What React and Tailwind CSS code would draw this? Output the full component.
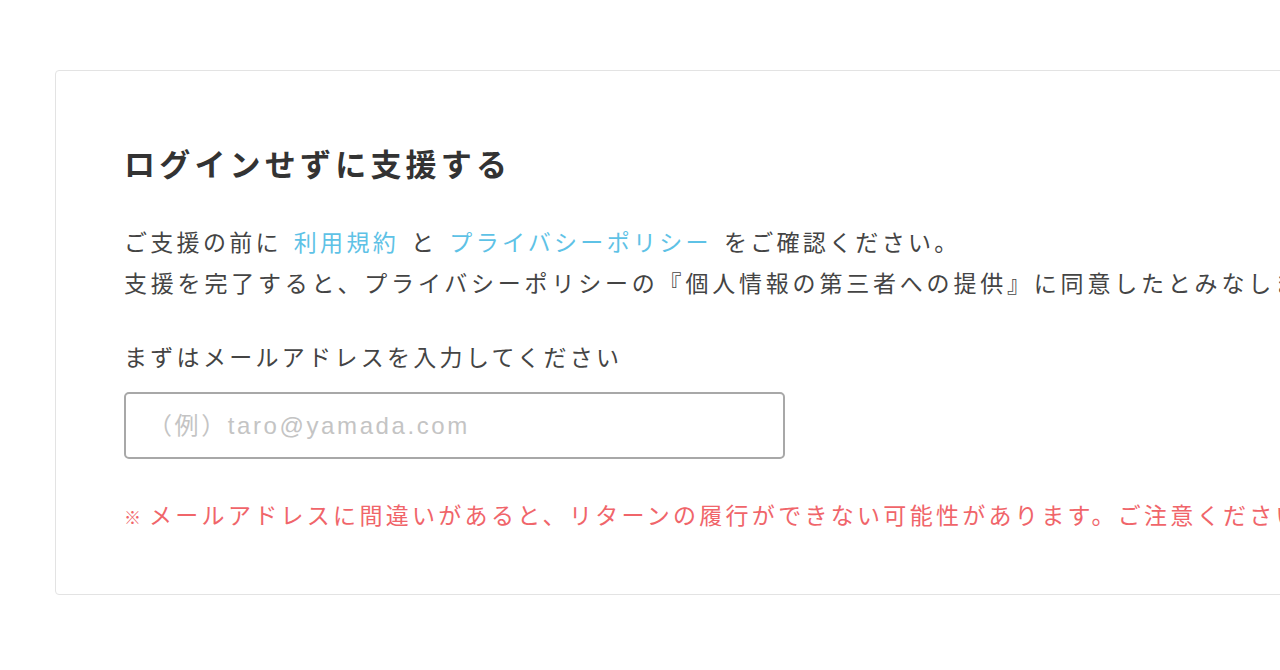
export default function App() {
  const jp = { fontFamily: '"Noto Sans CJK JP", "Noto Sans", sans-serif' };
  return (
    <div className="w-[1280px] h-[670px] overflow-hidden bg-white" style={jp}>
      <div className="ml-[55px] mt-[70px] w-[1300px] border border-[#e3e3e3] rounded-[4px] pl-[68px] pt-[70px] pb-[57px]">
        <h1 className="text-[31px] leading-[44px] font-bold tracking-[4.2px] text-[#333] whitespace-nowrap">
          ログインせずに支援する
        </h1>
        <div className="mt-[36px] text-[23px] leading-[41px] tracking-[3.3px] text-[#444] whitespace-nowrap">
          <p>
            ご支援の前に<span className="ml-[12px] mr-[12px] text-[#5ec2e6]">利用規約</span>と
            <span className="ml-[12px] mr-[12px] text-[#5ec2e6]">プライバシーポリシー</span>をご確認ください。
          </p>
          <p className="tracking-[3.8px]">支援を完了すると、プライバシーポリシーの『個人情報の第三者への提供』に同意したとみなします。</p>
        </div>
        <p className="mt-[33px] text-[23px] leading-[41px] tracking-[3.3px] text-[#444] whitespace-nowrap">
          まずはメールアドレスを入力してください
        </p>
        <input
          type="text"
          placeholder="（例）taro@yamada.com"
          className="mt-[15px] block w-[661px] h-[67px] border-2 border-[#a8a8a8] rounded-[5px] px-[22px] text-[24px] tracking-[2.6px] text-[#333] placeholder:text-[#c4c4c4] outline-none"
          style={{ fontFamily: '"Liberation Sans", "Noto Sans CJK JP", sans-serif' }}
        />
        <p className="mt-[35px] text-[23px] leading-[41px] tracking-[3.3px] text-[#f0656a] whitespace-nowrap">
          <span className="text-[17px] tracking-[0px] mr-[8px]">※</span>メールアドレスに間違いがあると、リターンの履行ができない可能性があります。ご注意ください。
        </p>
      </div>
    </div>
  );
}
